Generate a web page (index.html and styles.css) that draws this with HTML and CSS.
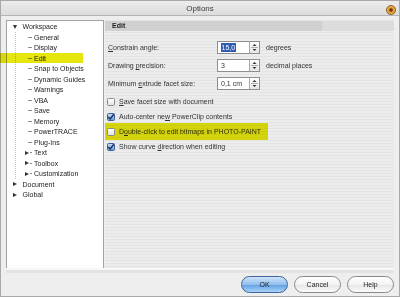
FILE: index.html
```html
<!DOCTYPE html>
<html>
<head>
<meta charset="utf-8">
<link rel="stylesheet" href="styles.css">
</head>
<body>
<div class="window">
  <div class="titlebar">
    <span></span>
    <span class="title">Options</span>
    <span class="close-wrap"><span class="close"></span></span>
  </div>
  <div class="main">
    <div class="tree">
      <div class="row"><span class="tog open"></span><span class="lbl">Workspace</span></div>
      <div class="children">
        <div class="row"><span class="tog leaf"></span><span class="lbl">General</span></div>
        <div class="row"><span class="tog leaf"></span><span class="lbl">Display</span></div>
        <div class="row hl"><span class="tog leaf"></span><span class="lbl">Edit</span></div>
        <div class="row"><span class="tog leaf"></span><span class="lbl">Snap to Objects</span></div>
        <div class="row"><span class="tog leaf"></span><span class="lbl">Dynamic Guides</span></div>
        <div class="row"><span class="tog leaf"></span><span class="lbl">Warnings</span></div>
        <div class="row"><span class="tog leaf"></span><span class="lbl">VBA</span></div>
        <div class="row"><span class="tog leaf"></span><span class="lbl">Save</span></div>
        <div class="row"><span class="tog leaf"></span><span class="lbl">Memory</span></div>
        <div class="row"><span class="tog leaf"></span><span class="lbl">PowerTRACE</span></div>
        <div class="row"><span class="tog leaf"></span><span class="lbl">Plug-Ins</span></div>
        <div class="row"><span class="tog closed"></span><span class="lbl">Text</span></div>
        <div class="row"><span class="tog closed"></span><span class="lbl">Toolbox</span></div>
        <div class="row"><span class="tog closed"></span><span class="lbl">Customization</span></div>
      </div>
      <div class="row"><span class="tog closed"></span><span class="lbl">Document</span></div>
      <div class="row"><span class="tog closed"></span><span class="lbl">Global</span></div>
    </div>
    <div class="pane">
      <div class="pane-head">Edit</div>
      <div class="pane-body">
        <div class="field">
          <span class="flabel"><u>C</u>onstrain angle:</span>
          <span class="spin"><span class="val"><span class="sel">15,0</span></span><span class="arrows"><svg width="9" height="11" viewBox="0 0 9 11"><path d="M2.5 4 L4.5 2 L6.5 4 Z" fill="#333"/><path d="M1 5.5 H8" stroke="#9a9a9a" stroke-width="0.8"/><path d="M2.5 7 L4.5 9 L6.5 7 Z" fill="#333"/></svg></span></span>
          <span class="unit">degrees</span>
        </div>
        <div class="field">
          <span class="flabel">Drawing <u>p</u>recision:</span>
          <span class="spin"><span class="val">3</span><span class="arrows"><svg width="9" height="11" viewBox="0 0 9 11"><path d="M2.5 4 L4.5 2 L6.5 4 Z" fill="#333"/><path d="M1 5.5 H8" stroke="#9a9a9a" stroke-width="0.8"/><path d="M2.5 7 L4.5 9 L6.5 7 Z" fill="#333"/></svg></span></span>
          <span class="unit">decimal places</span>
        </div>
        <div class="field last">
          <span class="flabel">Minimum <u>e</u>xtrude facet size:</span>
          <span class="spin"><span class="val">0,1 cm</span><span class="arrows"><svg width="9" height="11" viewBox="0 0 9 11"><path d="M2.5 4 L4.5 2 L6.5 4 Z" fill="#333"/><path d="M1 5.5 H8" stroke="#9a9a9a" stroke-width="0.8"/><path d="M2.5 7 L4.5 9 L6.5 7 Z" fill="#333"/></svg></span></span>
        </div>
        <div class="check"><span class="cb"></span><span><u>S</u>ave facet size with document</span></div>
        <div class="check"><span class="cb on"><svg width="8" height="8" viewBox="0 0 8 8"><path d="M1.3 4 L3.2 6 L6.8 1.3" fill="none" stroke="#1b2f5e" stroke-width="1.4"/></svg></span><span>Auto-center ne<u>w</u> PowerClip contents</span></div>
        <div class="check mark"><span class="cb"></span><span>D<u>o</u>uble-click to edit bitmaps in PHOTO-PAINT</span></div>
        <div class="check"><span class="cb on"><svg width="8" height="8" viewBox="0 0 8 8"><path d="M1.3 4 L3.2 6 L6.8 1.3" fill="none" stroke="#1b2f5e" stroke-width="1.4"/></svg></span><span>Show curve <u>d</u>irection when editing</span></div>
      </div>
    </div>
  </div>
  <div class="sep"></div>
  <div class="footer">
    <button class="btn primary">OK</button>
    <button class="btn">Cancel</button>
    <button class="btn">Help</button>
  </div>
</div>
</body>
</html>
```

FILE: styles.css
```css
html, body {
  margin: 0;
  padding: 0;
  background: #ffffff;
}
body {
  font-family: "Liberation Sans", Arial, sans-serif;
  font-size: 7px;
  color: #222;
}
.window {
  width: 400px;
  height: 297px;
  box-sizing: border-box;
  border: 1px solid #a9a9a9;
  background: #eeeeee;
  display: flex;
  flex-direction: column;
}
.titlebar {
  height: 15px;
  box-sizing: border-box;
  border-bottom: 1px solid #b4b4b4;
  background: linear-gradient(#ececec, #dcdcdc);
  display: grid;
  grid-template-columns: 1fr auto 1fr;
  align-items: center;
}
.title {
  font-size: 8px;
  color: #3a3a3a;
  padding-top: 1px;
}
.close-wrap {
  display: flex;
  justify-content: flex-end;
  padding-right: 3px;
  padding-top: 3px;
}
.close {
  width: 10px;
  height: 10px;
  border-radius: 50%;
  box-sizing: border-box;
  border: 1px solid #8a5a1a;
  background: radial-gradient(circle at 50% 50%, #6b3f0c 0 1.2px, #d98f2c 2.2px, #f2b552 3.5px, #c47a1c 100%);
}
.main {
  height: 252px;
  box-sizing: border-box;
  padding: 4px 5px 0 5px;
  display: flex;
  gap: 1px;
}
.tree {
  width: 98px;
  box-sizing: border-box;
  background: #ffffff;
  border: 1px solid #a3a3a3;
  border-bottom: none;
  padding-top: 0.5px;
}
.row {
  height: 10.5px;
  display: flex;
  align-items: center;
  padding-left: 3px;
  position: relative;
  white-space: nowrap;
}
.children {
  margin-left: 8px;
  border-left: 1px dotted #c4c4c4;
}
.children .row {
  padding-left: 6px;
}
.tog {
  width: 10px;
  height: 10px;
  margin-right: 2.5px;
  display: flex;
  align-items: center;
  justify-content: center;
  flex: none;
}
.children .tog {
  margin-right: 2px;
}
.tog.leaf {
  background: linear-gradient(#8c8c8c, #8c8c8c) no-repeat right center / 4px 1px;
}
.tog.open::before {
  content: "";
  width: 0;
  height: 0;
  border-top: 4px solid #333;
  border-left: 2.5px solid transparent;
  border-right: 2.5px solid transparent;
}
.tog.closed::before {
  content: "";
  width: 0;
  height: 0;
  border-left: 4px solid #333;
  border-top: 2.5px solid transparent;
  border-bottom: 2.5px solid transparent;
  margin-right: 1px;
}
.children .tog.closed {
  background: linear-gradient(#8c8c8c, #8c8c8c) no-repeat right center / 2px 1px;
}
.row.hl::before {
  content: "";
  position: absolute;
  left: -16px;
  top: 0;
  width: 83px;
  height: 10px;
  background: #e6e60e;
  mix-blend-mode: multiply;
}
.pane {
  width: 289px;
  box-sizing: border-box;
  background: repeating-linear-gradient(#e4e4e4 0 1px, #ececec 1px 3px);
  display: flex;
  flex-direction: column;
}
.pane-head {
  margin-top: 1px;
  height: 10px;
  line-height: 10px;
  padding-left: 7px;
  font-weight: bold;
  color: #222;
  background: linear-gradient(90deg, #d0d0d0 0 75%, #dcdcdc 75% 100%);
}
.pane-body {
  padding: 10px 0 0 3px;
}
.field {
  height: 13px;
  display: flex;
  align-items: center;
  margin-bottom: 5px;
  color: #333;
}
.field.last {
  margin-bottom: 4px;
}
.flabel {
  width: 109px;
}
.spin {
  width: 43px;
  height: 13px;
  box-sizing: border-box;
  border: 1px solid #8e8e8e;
  background: #fff;
  display: flex;
}
.val {
  flex: 1;
  padding-left: 3px;
  line-height: 11px;
  display: flex;
  align-items: center;
  color: #333;
}
.sel {
  background: #2d5cb4;
  color: #fff;
  line-height: 9px;
  padding: 0 0.5px;
}
.arrows {
  width: 10px;
  box-sizing: border-box;
  border-left: 1px solid #a8a8a8;
  background: linear-gradient(#ffffff, #e6e6e6);
  display: flex;
  align-items: center;
  justify-content: center;
}
.arrows svg {
  display: block;
}
.unit {
  margin-left: 6px;
}
.check {
  height: 15px;
  display: flex;
  align-items: center;
  position: relative;
  color: #333;
  white-space: nowrap;
}
.cb {
  width: 8px;
  height: 8px;
  box-sizing: border-box;
  margin-left: -1px;
  margin-right: 4px;
  border: 1px solid #8a8a8a;
  border-radius: 1.5px;
  background: linear-gradient(#ffffff, #e4e4e4);
  flex: none;
  position: relative;
}
.cb.on {
  border-color: #3d5f9a;
  background: linear-gradient(#c3daf5, #6e9fd9);
}
.cb svg {
  position: absolute;
  left: -1px;
  top: -1px;
}
.check.mark::before {
  content: "";
  position: absolute;
  left: -3px;
  top: -1px;
  width: 163px;
  height: 17px;
  background: #e6e60e;
  mix-blend-mode: multiply;
}
.sep {
  height: 5px;
  margin: 0 5px;
  background: linear-gradient(#f7f7f7 0 2px, #e3e3e3 2px 5px);
}
.footer {
  flex: 1;
  display: flex;
  justify-content: flex-end;
  align-items: flex-start;
  gap: 6px;
  padding: 3px 5px 0 0;
}
.btn {
  width: 47px;
  height: 16.5px;
  box-sizing: border-box;
  border: 1px solid #8a8a8a;
  border-radius: 9px;
  background: linear-gradient(#ffffff, #f3f3f3 50%, #e6e6e6 51%, #fafafa);
  font-family: "Liberation Sans", Arial, sans-serif;
  font-size: 7px;
  color: #222;
  padding: 0;
  margin: 0;
}
.btn.primary {
  border-color: #40639a;
  background: linear-gradient(#cfe4fa, #90bfec 50%, #5f9ee0 51%, #a9d4fa);
}
```
